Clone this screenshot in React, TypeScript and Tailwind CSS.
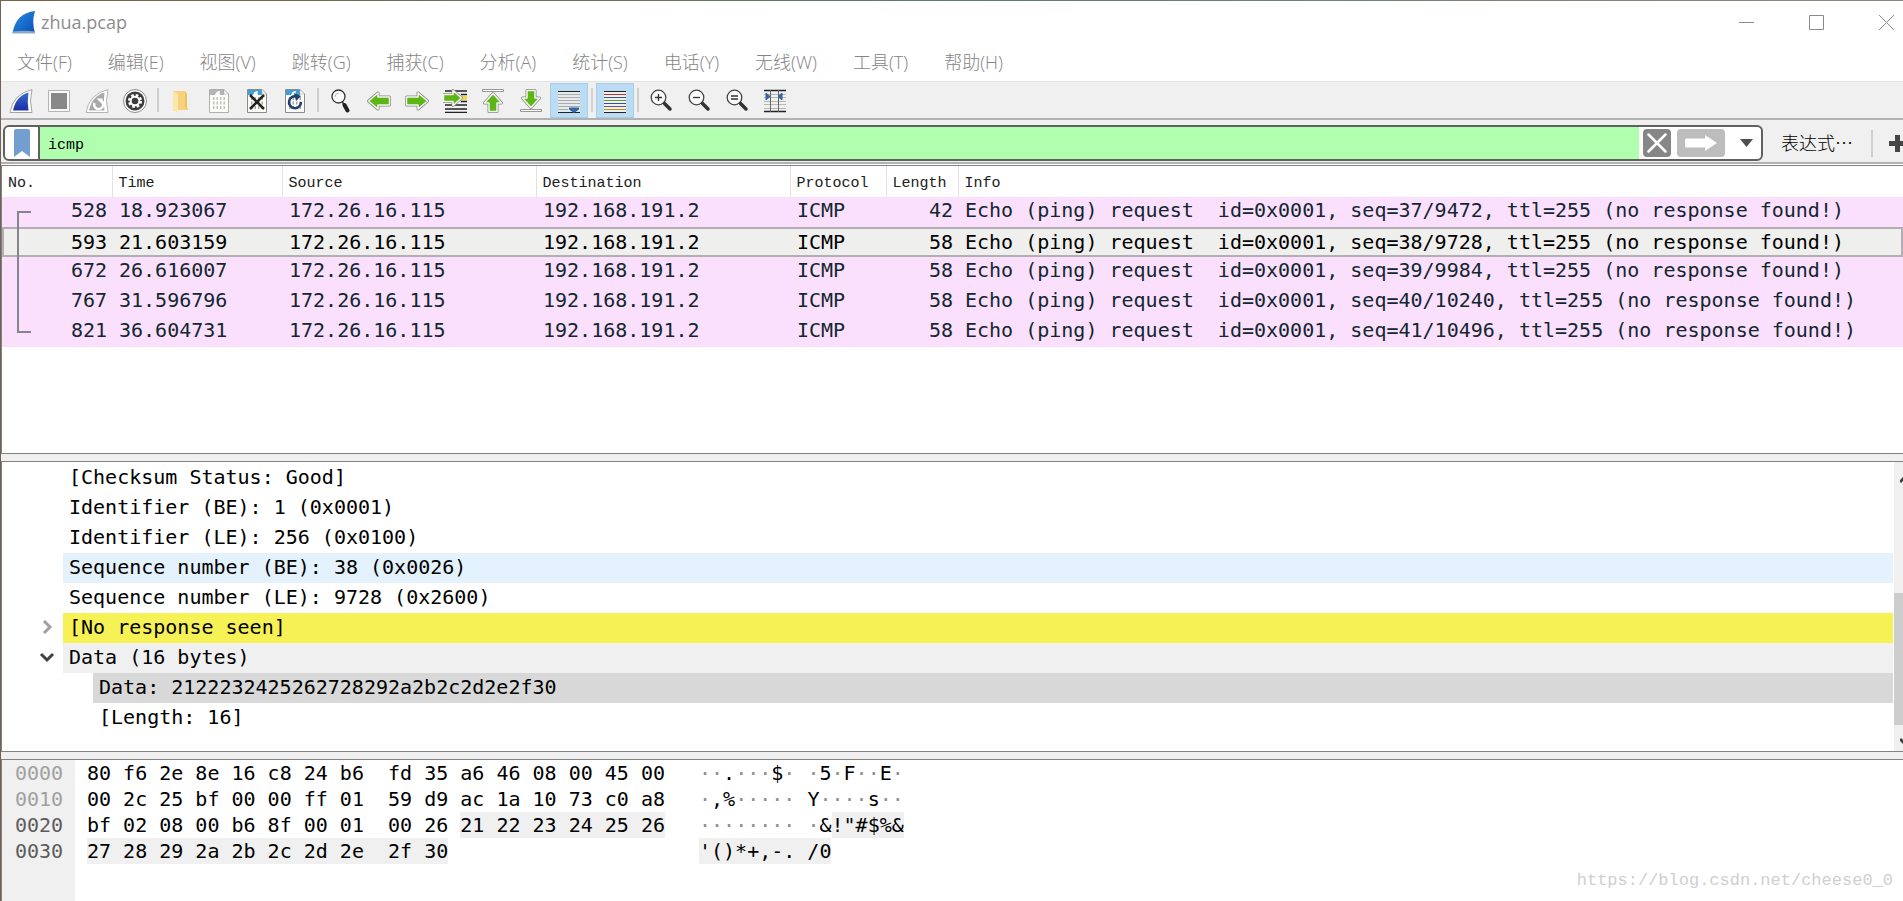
import { useState } from "react";
import type { ReactNode } from "react";

const menus = ["文件(F)", "编辑(E)", "视图(V)", "跳转(G)", "捕获(C)", "分析(A)", "统计(S)", "电话(Y)", "无线(W)", "工具(T)", "帮助(H)"];

const packets = [
  { no: 528, time: "18.923067", length: 42, info: "Echo (ping) request  id=0x0001, seq=37/9472, ttl=255 (no response found!)" },
  { no: 593, time: "21.603159", length: 58, info: "Echo (ping) request  id=0x0001, seq=38/9728, ttl=255 (no response found!)" },
  { no: 672, time: "26.616007", length: 58, info: "Echo (ping) request  id=0x0001, seq=39/9984, ttl=255 (no response found!)" },
  { no: 767, time: "31.596796", length: 58, info: "Echo (ping) request  id=0x0001, seq=40/10240, ttl=255 (no response found!)" },
  { no: 821, time: "36.604731", length: 58, info: "Echo (ping) request  id=0x0001, seq=41/10496, ttl=255 (no response found!)" },
];

// hex / ascii are split in [plain, highlighted]
const bytes = [
  { offset: "0000", hex: ["80 f6 2e 8e 16 c8 24 b6  fd 35 a6 46 08 00 45 00", ""], ascii: ["··.···$· ·5·F··E·", ""] },
  { offset: "0010", hex: ["00 2c 25 bf 00 00 ff 01  59 d9 ac 1a 10 73 c0 a8", ""], ascii: ["·,%····· Y····s··", ""] },
  { offset: "0020", hex: ["bf 02 08 00 b6 8f 00 01  00 26 ", "21 22 23 24 25 26"], ascii: ["········ ·&", "!\"#$%&"] },
  { offset: "0030", hex: ["", "27 28 29 2a 2b 2c 2d 2e  2f 30"], ascii: ["", "'()*+,-. /0"] },
];

export default function App() {
  const [selected, setSelected] = useState(593);

  return (
    <div className="flex min-h-screen flex-col overflow-hidden border-l border-[#6f6357] bg-white font-['Open_Sans','Noto_Sans_CJK_SC',sans-serif] text-black">
      <div className="h-px bg-linear-to-r from-[#7a6244] via-[#5c7d6c] to-[#8f8a80]" />

      {/* Title bar */}
      <header className="flex h-[42px] items-center">
        <LogoIcon />
        <h1 className="ml-[5px] text-lg leading-6 text-[#8c8c8c]">zhua.pcap</h1>
        <div className="-mr-[18px] ml-auto flex h-full">
          <WindowButton label="Minimize"><path d="M0 7.5h15" /></WindowButton>
          <WindowButton label="Maximize"><path d="M.5.5h14v14H.5z" /></WindowButton>
          <WindowButton label="Close"><path d="M0 0l15 15M15 0L0 15" /></WindowButton>
        </div>
      </header>

      {/* Menu */}
      <nav className="flex h-[39px] items-center gap-9 border-b border-[#e4e4e4] pl-4 text-lg leading-6 font-light text-[#858585]">
        {menus.map((m) => (
          <button key={m} className="whitespace-nowrap">{m}</button>
        ))}
      </nav>

      <Toolbar />
      <FilterBar />

      {/* Packet list */}
      <section className="relative mt-px min-h-[289px] border-y border-l border-[#828282]">
        <table className="w-full table-fixed border-collapse font-['DejaVu_Sans_Mono',monospace] text-xl">
          <colgroup>
            <col className="w-[110px]" />
            <col className="w-[170px]" />
            <col className="w-[254px]" />
            <col className="w-[254px]" />
            <col className="w-[96px]" />
            <col className="w-[72px]" />
            <col />
          </colgroup>
          <thead className="font-['Liberation_Mono',monospace] text-[15px] text-[#202020]">
            <tr className="h-[31px]">
              <Th>No.</Th>
              <Th>Time</Th>
              <Th>Source</Th>
              <Th>Destination</Th>
              <Th>Protocol</Th>
              <Th>Length</Th>
              <th className="px-[6px] pt-1 text-left font-normal">Info</th>
            </tr>
          </thead>
          <tbody className="leading-[26px] whitespace-pre">
            {packets.map((p) => (
              <tr
                key={p.no}
                onClick={() => setSelected(p.no)}
                className={
                  p.no === selected
                    ? "h-[30px] bg-[#efefed] align-middle outline-2 -outline-offset-2 outline-[#b4adb4]"
                    : "h-[30px] bg-[#fbe0fe] align-top text-[#12272e]"
                }
              >
                <td className="pr-[5px] text-right">{p.no}</td>
                <td className="pl-[7px]">{p.time}</td>
                <td className="pl-[7px]">172.26.16.115</td>
                <td className="pl-[7px]">192.168.191.2</td>
                <td className="pl-[7px]">ICMP</td>
                <td className="pr-[5px] text-right">{p.length}</td>
                <td className="pl-[7px]">{p.info}</td>
              </tr>
            ))}
          </tbody>
        </table>
        {/* Conversation bracket */}
        <svg className="absolute top-[45px] left-[15px]" width="14" height="123" fill="none" stroke="#85858f" strokeWidth="2">
          <path d="M14 1H1v120h13" />
        </svg>
      </section>

      <div className="h-[7px] bg-[#f0f0f0]" />

      {/* Packet details */}
      <section className="flex border-y border-l border-[#828282]">
        <ul className="min-w-0 flex-1 pt-px pr-px pb-[18px] font-['DejaVu_Sans_Mono',monospace] text-xl">
          <TreeRow>[Checksum Status: Good]</TreeRow>
          <TreeRow>Identifier (BE): 1 (0x0001)</TreeRow>
          <TreeRow>Identifier (LE): 256 (0x0100)</TreeRow>
          <TreeRow className="bg-[#e4f2fd]">Sequence number (BE): 38 (0x0026)</TreeRow>
          <TreeRow>Sequence number (LE): 9728 (0x2600)</TreeRow>
          <TreeRow className="bg-[#f6f154]" arrow="right">[No response seen]</TreeRow>
          <TreeRow className="bg-[#f0f0f0]" arrow="down">Data (16 bytes)</TreeRow>
          <TreeRow className="bg-[#d8d8d8]" nested>Data: 2122232425262728292a2b2c2d2e2f30</TreeRow>
          <TreeRow nested>[Length: 16]</TreeRow>
        </ul>
        <div className="flex w-[9px] flex-col overflow-hidden bg-[#f0f0f0]">
          <ScrollArrow label="Scroll up" d="M0 7l6-6 6 6" />
          <div className="flex-1" />
          <div className="h-[132px] bg-[#cdcdcd]" />
          <ScrollArrow label="Scroll down" d="M0 1l6 6 6-6" />
        </div>
      </section>

      <div className="h-[7px] bg-[#f0f0f0]" />

      {/* Packet bytes */}
      <section className="relative flex flex-1 border-t border-l border-[#828282] bg-linear-to-r from-[#f0f0f0] from-[73px] to-white to-[73px]">
        <table className="self-start border-collapse font-['DejaVu_Sans_Mono',monospace] text-xl leading-[26px] whitespace-pre">
          <tbody>
            {bytes.map((b, i) => (
              <tr key={b.offset} className="h-[26px]">
                <td className={i < 2 ? "w-[73px] pl-[13px] text-[#a0a0a0]" : "w-[73px] pl-[13px] text-[#5c5c5c]"}>{b.offset}</td>
                <td className="w-[624px] pl-3">
                  {b.hex[0]}
                  <Mark>{b.hex[1]}</Mark>
                </td>
                <td>
                  {b.ascii[0].split("").map((c, j) => (
                    <span key={j} className={c === "·" ? "text-[#909090]" : ""}>{c}</span>
                  ))}
                  <Mark>{b.ascii[1]}</Mark>
                </td>
              </tr>
            ))}
          </tbody>
        </table>
        <p className="absolute right-[10px] bottom-2 font-['Liberation_Mono',monospace] text-[17px] leading-6 text-[#cfcfcf]">
          https://blog.csdn.net/cheese0_0
        </p>
      </section>
    </div>
  );
}

function WindowButton({ label, children }: { label: string; children: ReactNode }) {
  return (
    <button aria-label={label} className="flex w-[70px] items-center justify-center">
      <svg width="15" height="15" fill="none" stroke="#8a8a8a">{children}</svg>
    </button>
  );
}

function Th({ children }: { children: ReactNode }) {
  return <th className="border-r border-[#e2e2e2] px-[6px] pt-1 text-left font-normal">{children}</th>;
}

function Mark({ children }: { children: ReactNode }) {
  return <span className="inline-block bg-[#f0f0f0] align-top">{children}</span>;
}

function TreeRow({ children, className = "", arrow, nested }: { children: ReactNode; className?: string; arrow?: "right" | "down"; nested?: boolean }) {
  return (
    <li className="flex h-[30px] leading-[28px]">
      <span className={nested ? "w-[91px]" : "flex w-[61px] items-center justify-end pr-2 pb-[2px]"}>
        {arrow && (
          <button aria-label={arrow === "right" ? "Expand" : "Collapse"}>
            <svg width="16" height="16" fill="none" stroke={arrow === "right" ? "#a0a0a0" : "#404040"} strokeWidth="3">
              {arrow === "right" ? <path d="M5 2l6 6-6 6" /> : <path d="M2 5l6 6 6-6" />}
            </svg>
          </button>
        )}
      </span>
      <span className={`flex-1 pl-[6px] whitespace-pre ${className}`}>{children}</span>
    </li>
  );
}

function ScrollArrow({ label, d }: { label: string; d: string }) {
  return (
    <button aria-label={label} className="flex h-[26px] items-center pt-2 pl-[6px]">
      <svg className="shrink-0" width="12" height="8" fill="none" stroke="#404040" strokeWidth="3"><path d={d} /></svg>
    </button>
  );
}

function FilterBar() {
  return (
    <div className="flex items-center border-b-2 border-[#b2b2b2] bg-[#f0f0f0] pt-[5px] pb-px pl-[2px]">
      <div className="flex h-9 min-w-0 flex-1 items-center rounded-md border-2 border-[#616161] bg-white">
        <button aria-label="Bookmark" className="flex h-full w-[35px] items-center justify-center border-r-2 border-[#616161]">
          <svg width="16" height="28"><path d="M0 2q0-2 2-2h12q2 0 2 2v26l-8-6-8 6z" fill="#729fcf" /></svg>
        </button>
        <input
          aria-label="Display filter"
          defaultValue="icmp"
          className="h-full min-w-0 flex-1 bg-[#afffaf] px-2 pt-1 font-['Liberation_Mono',monospace] text-[15px] outline-none"
        />
        <button aria-label="Clear" className="ml-1 flex size-7 items-center justify-center rounded bg-[#868686]">
          <svg width="20" height="20" fill="none" stroke="#fff" strokeWidth="2.500" strokeLinecap="round"><path d="M1.500 1.500l17 17M18.500 1.500l-17 17" /></svg>
        </button>
        <button aria-label="Apply" className="ml-[6px] flex h-7 w-12 items-center justify-center rounded bg-[#bdbdbd]">
          <svg width="32" height="16" fill="#fff"><path d="M1.500 3.500H20V0l12 8-12 8v-3.500H1.500Q0 12.500 0 11V5q0-1.500 1.500-1.500z" /></svg>
        </button>
        <button aria-label="Filter history" className="flex h-full w-9 items-center justify-end pr-2">
          <svg width="13" height="8" fill="#505050"><path d="M0 0h13L6.500 8z" /></svg>
        </button>
      </div>
      <button className="ml-[18px] pb-[2px] font-['Noto_Sans_CJK_SC',sans-serif] text-lg leading-6 font-light">表达式…</button>
      <span className="ml-[18px] h-[27px] w-[2px] bg-[#cfcfcf]" />
      <button aria-label="Add filter button" className="ml-4 w-[14px] overflow-hidden">
        <svg width="17" height="17" stroke="#454545" strokeWidth="5"><path d="M0 8.500h17M8.500 0v17" /></svg>
      </button>
    </div>
  );
}

function Toolbar() {
  return (
    <div className="flex h-[38px] border-b-2 border-[#b2b2b2] bg-[#f0f0f0] pt-px pl-px">
      <Tool label="Start capture">
        <path d="M1 23.500Q4 5 23 .5q-3 11 0 23z" fill="#fff" stroke="#a4a4a4" />
        <path d="M4 21.500Q7 7 19.500 3.500q-1.500 9 0 18z" fill="url(#fin)" />
        <defs>
          <linearGradient id="fin" x1="0" y1="0" x2="0" y2="1">
            <stop offset="0" stopColor="#3a68d4" />
            <stop offset="1" stopColor="#1d2fa3" />
          </linearGradient>
        </defs>
      </Tool>
      <Tool label="Stop capture">
        <path d="M1.500 1.500h21v21h-21z" fill="#f8f8f8" stroke="#b4b4b4" />
        <path d="M4 4h16v16H4z" fill="#888" />
      </Tool>
      <Tool label="Restart capture">
        <path d="M1 23.500Q4 5 23 .5q-3 11 0 23z" fill="#fff" stroke="#b4b4b4" />
        <path d="M4 21.500Q7 7 19.500 3.500q-1.500 9 0 18z" fill="#a9a9a9" />
        <path d="M9.500 14a4.500 4.500 0 1 0 7-2" fill="none" stroke="#fff" strokeWidth="2.500" />
        <path d="M11.500 9.500h6v6z" fill="#fff" />
      </Tool>
      <Tool label="Capture options">
        <circle cx="12" cy="12" r="11.500" fill="#fff" stroke="#8a8a8a" />
        <circle cx="12" cy="12" r="9.500" fill="#3c3c3c" />
        <circle cx="12" cy="12" r="5.800" fill="none" stroke="#fff" strokeWidth="2.600" strokeDasharray="2.600 1.955" />
        <circle cx="12" cy="12" r="4.300" fill="none" stroke="#fff" strokeWidth="2" />
      </Tool>
      <Divider />
      <Tool label="Open">
        <path d="M4 2h12v16l3 1v2H8l-4 1z" fill="#f6d27c" />
        <path d="M4 2l5 3v19l-5-3z" fill="#fbe7a8" />
        <path d="M16 2v16l2 2V5z" fill="#efc05f" />
      </Tool>
      <Tool label="Save"><DocPage gray /></Tool>
      <Tool label="Close file">
        <DocPage />
        <path d="M5 6l14 14M19 6L5 20" fill="none" stroke="#222" strokeWidth="2.500" />
      </Tool>
      <Tool label="Reload">
        <DocPage />
        <path d="M14 7.500a6 6 0 1 0 4 5.500" fill="none" stroke="#223f70" strokeWidth="2.500" />
        <path d="M11 4l7 3-5 5z" fill="#223f70" />
      </Tool>
      <Divider />
      <Tool label="Find packet">
        <circle cx="9.500" cy="7.500" r="6.500" fill="#fafafa" stroke="#333" strokeWidth="1.300" />
        <path d="M6 8q0-4 4-4" fill="none" stroke="#bbb" />
        <path d="M13 12.500l2 3" stroke="#333" strokeWidth="1.500" />
        <path d="M15.500 16l3 5.500" stroke="#222" strokeWidth="4" strokeLinecap="round" />
      </Tool>
      <Tool label="Go back"><Arrow d="M1.500 12L11 4v4h11.500v8H11v4z" /></Tool>
      <Tool label="Go forward"><Arrow d="M22.500 12L13 4v4H1.500v8H13v4z" /></Tool>
      <Tool label="Go to packet">
        <path d="M2 2h22M18 5.500h6M18 12.500h6M2 16h22M2 20h22M2 23.500h22" stroke="#222" strokeWidth="1.500" />
        <path d="M16 9h8" stroke="#f3d648" strokeWidth="4" />
        <Arrow d="M18.500 9L10 1.500V5.500H.5v7H10v4z" />
      </Tool>
      <Tool label="First packet">
        <path d="M1.500 .5h21v2h-21z" fill="#fff" stroke="#999" />
        <Arrow d="M12 4.500L20.500 14H16v8.500H8V14H3.500z" />
      </Tool>
      <Tool label="Last packet">
        <path d="M1.500 20.500h21v2h-21z" fill="#fff" stroke="#999" />
        <Arrow d="M12 18.500L20.500 9H16V1.500H8V9H3.500z" />
      </Tool>
      <Tool label="Auto scroll" active>
        <path d="M1 2h22v21H1z" fill="#e4eaee" />
        <path d="M1 2.500h22M1 23.500h22" stroke="#222" />
        <path d="M1 5.500h22M1 8.500h22M1 11.500h22M1 14.500h22M1 17.500h22M1 20.500h10" stroke="#a9aea4" />
        <path d="M12 18.500h10v2L17 24l-5-3.500z" fill="#3465a4" />
      </Tool>
      <Divider />
      <Tool label="Colorize" active>
        <path d="M1 2h22v21H1z" fill="#eef0f0" />
        <path d="M1 2.500h22M1 23.500h22" stroke="#222" />
        <path d="M1 5.500h22" stroke="#b8322a" />
        <path d="M1 8.500h22" stroke="#2f5a78" />
        <path d="M1 11.500h22" stroke="#5aa028" />
        <path d="M1 14.500h22" stroke="#3a4f8c" />
        <path d="M1 17.500h22" stroke="#75507b" />
        <path d="M1 20.500h22" stroke="#b8960a" />
      </Tool>
      <Divider />
      <Tool label="Zoom in"><Lens d="M6 8.500h7M9.500 5v7" /></Tool>
      <Tool label="Zoom out"><Lens d="M6 8.500h7" /></Tool>
      <Tool label="Normal size"><Lens d="M6 7h7M6 10h7" /></Tool>
      <Tool label="Resize columns">
        <path d="M1 1.500h22M1 22.500h22" stroke="#222" strokeWidth="1.500" />
        <path d="M1 5.500h22M1 8.500h22M1 12.500h22M1 15.500h22M1 19.500h22" stroke="#b5b8b0" />
        <path d="M7.500 1v22M15.500 1v22" stroke="#666" />
        <path d="M3 4l4 3.500L3 11zM19 4l-4 3.500 4 3.500z" fill="#3465a4" stroke="#3465a4" />
      </Tool>
    </div>
  );
}

function Tool({ label, active, children }: { label: string; active?: boolean; children: ReactNode }) {
  return (
    <button aria-label={label} className={`flex w-[38px] shrink-0 items-center justify-center ${active ? "border border-[#a5cdec] bg-[#bcdcf4]" : ""}`}>
      <svg width="24" height="24" viewBox="0 0 24 24">{children}</svg>
    </button>
  );
}

function Divider() {
  return <span className="mx-[3px] mt-[5px] h-6 w-[2px] bg-[#d0d0d0]" />;
}

// Green arrow with a white rim and gray outline
function Arrow({ d }: { d: string }) {
  return (
    <>
      <path d={d} fill="none" stroke="#8c8c8c" strokeWidth="3" strokeLinejoin="round" />
      <path d={d} fill="#5cb615" stroke="#f4f8ee" strokeWidth="1.500" strokeLinejoin="round" />
    </>
  );
}

function Lens({ d }: { d: string }) {
  return (
    <>
      <circle cx="9.500" cy="8.500" r="7.300" fill="#fbfbfb" stroke="#444" strokeWidth="1.300" />
      <path d={d} fill="none" stroke="#333" strokeWidth="1.300" />
      <path d="M15.500 14.500l5.500 5.500" stroke="#333" strokeWidth="3.500" strokeLinecap="round" />
    </>
  );
}

function DocPage({ gray }: { gray?: boolean }) {
  return (
    <>
      <path d="M2.500 .5H17l4.500 4.500v18.500h-19z" fill="#fdfdf8" stroke={gray ? "#b0b0b0" : "#8d8d88"} />
      <path d="M3 1h14v5H3z" fill={gray ? "#b4b4b4" : "#3e9fd6"} />
      <path d="M17 .5V5h4.500z" fill="#fff" stroke="#aaa" strokeWidth=".6" />
      <path d="M8 6q1-4 5-4-1 2 0 4z" fill="#fff" />
      <path d="M6 9.500h13M6 14h13M6 18.500h13" stroke={gray ? "#c0c0c0" : "#a8ab9e"} strokeWidth="3" strokeDasharray="1.500 2" />
    </>
  );
}

function LogoIcon() {
  return (
    <svg className="ml-[11px]" width="24" height="24" viewBox="0 0 24 24">
      <defs>
        <linearGradient id="logo" x1="0" y1="0" x2="1" y2="1">
          <stop offset="0" stopColor="#2b8fea" />
          <stop offset="1" stopColor="#0a4fb0" />
        </linearGradient>
      </defs>
      <path d="M.5 23Q4 3 23 1q-3.500 11 0 22z" fill="url(#logo)" />
      <path d="M1 21.500q11-1.500 22 0v2H.5z" fill="#8fa9c4" />
    </svg>
  );
}
